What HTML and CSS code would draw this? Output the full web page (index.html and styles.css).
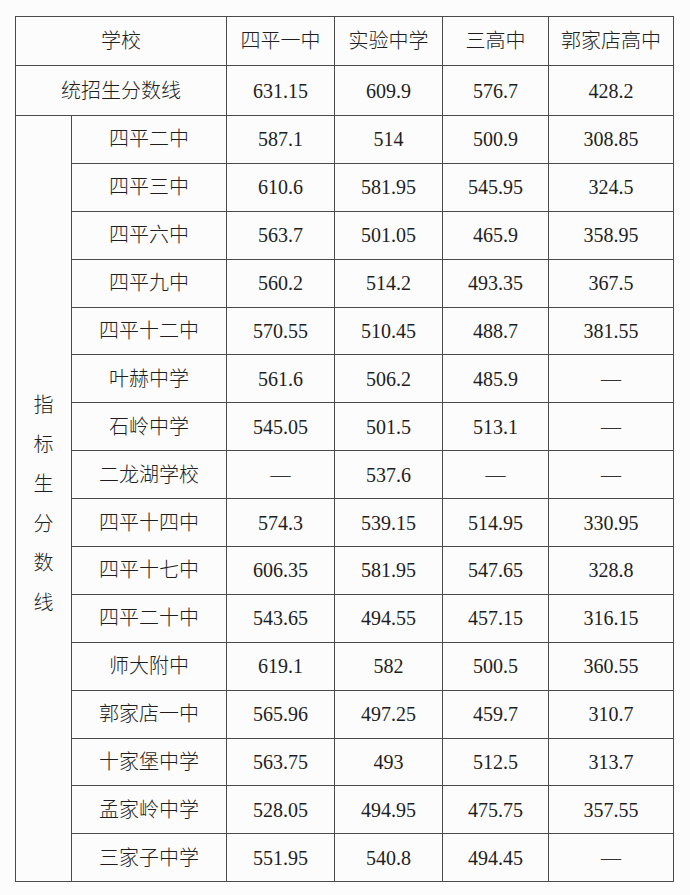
FILE: index.html
```html
<!DOCTYPE html>
<html lang="zh-CN">
<head>
<meta charset="utf-8">
<title>分数线</title>
<link rel="stylesheet" href="styles.css">
</head>
<body>
<table class="scores">
  <colgroup>
    <col class="c-a"><col class="c-b"><col class="c-n"><col class="c-n"><col class="c-m"><col class="c-l">
  </colgroup>
  <tr class="r-head">
    <td colspan="2">学校</td><td>四平一中</td><td>实验中学</td><td>三高中</td><td>郭家店高中</td>
  </tr>
  <tr class="r-main">
    <td colspan="2">统招生分数线</td><td>631.15</td><td>609.9</td><td>576.7</td><td>428.2</td>
  </tr>
  <tr>
    <td rowspan="16" class="vert"><span>指</span><span>标</span><span>生</span><span>分</span><span>数</span><span>线</span></td>
    <td>四平二中</td><td>587.1</td><td>514</td><td>500.9</td><td>308.85</td>
  </tr>
  <tr><td>四平三中</td><td>610.6</td><td>581.95</td><td>545.95</td><td>324.5</td></tr>
  <tr><td>四平六中</td><td>563.7</td><td>501.05</td><td>465.9</td><td>358.95</td></tr>
  <tr><td>四平九中</td><td>560.2</td><td>514.2</td><td>493.35</td><td>367.5</td></tr>
  <tr><td>四平十二中</td><td>570.55</td><td>510.45</td><td>488.7</td><td>381.55</td></tr>
  <tr><td>叶赫中学</td><td>561.6</td><td>506.2</td><td>485.9</td><td class="dash">—</td></tr>
  <tr><td>石岭中学</td><td>545.05</td><td>501.5</td><td>513.1</td><td class="dash">—</td></tr>
  <tr><td>二龙湖学校</td><td class="dash">—</td><td>537.6</td><td class="dash">—</td><td class="dash">—</td></tr>
  <tr><td>四平十四中</td><td>574.3</td><td>539.15</td><td>514.95</td><td>330.95</td></tr>
  <tr><td>四平十七中</td><td>606.35</td><td>581.95</td><td>547.65</td><td>328.8</td></tr>
  <tr><td>四平二十中</td><td>543.65</td><td>494.55</td><td>457.15</td><td>316.15</td></tr>
  <tr><td>师大附中</td><td>619.1</td><td>582</td><td>500.5</td><td>360.55</td></tr>
  <tr><td>郭家店一中</td><td>565.96</td><td>497.25</td><td>459.7</td><td>310.7</td></tr>
  <tr><td>十家堡中学</td><td>563.75</td><td>493</td><td>512.5</td><td>313.7</td></tr>
  <tr><td>孟家岭中学</td><td>528.05</td><td>494.95</td><td>475.75</td><td>357.55</td></tr>
  <tr><td>三家子中学</td><td>551.95</td><td>540.8</td><td>494.45</td><td class="dash">—</td></tr>
</table>
</body>
</html>
```

FILE: styles.css
```css
html, body {
  margin: 0;
  padding: 0;
  background: #fcfcfc;
}

body {
  padding: 16px 0 0 15px;
  font-family: "Liberation Serif", "Noto Sans CJK SC", serif;
  font-size: 20px;
  color: #1e1e1e;
}

.scores {
  border-collapse: collapse;
  table-layout: fixed;
  width: 658px;
}

.c-a { width: 56px; }
.c-b { width: 155px; }
.c-n { width: 108px; }
.c-m { width: 106px; }
.c-l { width: 125px; }

.scores tr { height: 47.9px; }
.scores tr.r-head { height: 49px; }
.scores tr.r-main { height: 50px; }

.scores td {
  border: 1px solid #4a4a4a;
  text-align: center;
  vertical-align: middle;
  padding: 0;
  line-height: 1;
  font-weight: 300;
}

.scores td.vert {
  padding-top: 12px;
}

.vert span {
  display: block;
  line-height: 39.5px;
}

.dash {
  color: #333;
}
```
